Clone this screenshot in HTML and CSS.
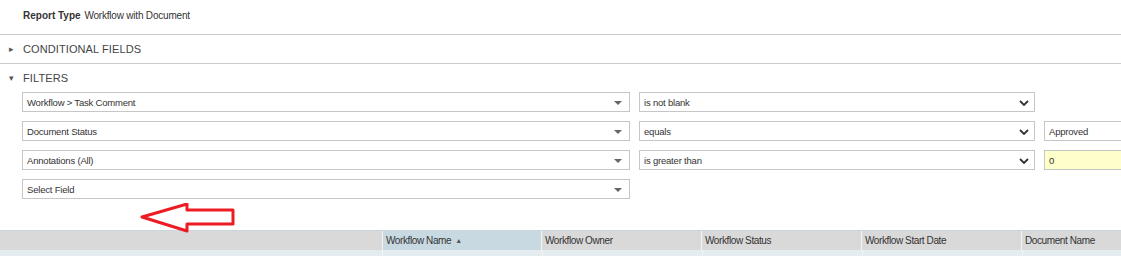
FILE: index.html
```html
<!DOCTYPE html>
<html lang="en">
<head>
    <meta charset="UTF-8">
    <title>Report Filters</title>
    <link rel="stylesheet" href="styles.css">
</head>
<body>
    <div class="report-type">
        <span class="label">Report Type</span>
        <span class="value">Workflow with Document</span>
    </div>
    <div class="section-head collapsed">
        <span class="toggle">&#9656;</span>CONDITIONAL FIELDS
    </div>
    <div class="section-head open">
        <span class="toggle">&#9662;</span>FILTERS
    </div>
    <div class="filters">
        <div class="filter-row">
            <div class="field">Workflow &gt; Task Comment<span class="caret"></span></div>
            <div class="operator">is not blank
                <svg class="chev" viewBox="0 0 10 6" width="10" height="6"><path d="M1 1 L5 5 L9 1" fill="none" stroke="#333" stroke-width="1.8"/></svg>
            </div>
        </div>
        <div class="filter-row">
            <div class="field">Document Status<span class="caret"></span></div>
            <div class="operator">equals
                <svg class="chev" viewBox="0 0 10 6" width="10" height="6"><path d="M1 1 L5 5 L9 1" fill="none" stroke="#333" stroke-width="1.8"/></svg>
            </div>
            <div class="val">Approved</div>
        </div>
        <div class="filter-row">
            <div class="field">Annotations (All)<span class="caret"></span></div>
            <div class="operator">is greater than
                <svg class="chev" viewBox="0 0 10 6" width="10" height="6"><path d="M1 1 L5 5 L9 1" fill="none" stroke="#333" stroke-width="1.8"/></svg>
            </div>
            <div class="val hl">0</div>
        </div>
        <div class="filter-row">
            <div class="field">Select Field<span class="caret"></span></div>
        </div>
        <!-- annotation arrow drawn over the page -->
        <svg class="mark" width="100" height="34" viewBox="0 0 100 34">
            <polygon points="3,14 48,1 48,7 94,7 94,21 48,21 48,28" fill="none" stroke="#ed1c24" stroke-width="3" stroke-linejoin="round"/>
        </svg>
    </div>
    <div class="grid">
        <div class="grid-head">
            <div class="col first"></div>
            <div class="col sorted">Workflow Name <span class="sort">&#9650;</span></div>
            <div class="col">Workflow Owner</div>
            <div class="col">Workflow Status</div>
            <div class="col">Workflow Start Date</div>
            <div class="col">Document Name</div>
        </div>
        <div class="grid-row">
            <div class="col first"></div>
            <div class="col"></div>
            <div class="col"></div>
            <div class="col"></div>
            <div class="col"></div>
            <div class="col"></div>
        </div>
    </div>
</body>
</html>
```

FILE: styles.css
```css
body {
    margin: 0;
    padding: 0;
    background: #fff;
    color: #333;
    font-family: 'Liberation Sans', Arial, sans-serif;
    font-size: 10px;
    overflow: hidden;
}
.report-type {
    height: 35px;
    box-sizing: border-box;
    padding: 10px 0 0 23px;
    border-bottom: 1px solid #ccc;
    font-size: 10px;
}
.report-type .label {
    font-weight: bold;
    margin-right: 1px;
}
.report-type .value {
    letter-spacing: -0.2px;
}
.section-head {
    box-sizing: border-box;
    padding-left: 9px;
    font-size: 11px;
    letter-spacing: 0.1px;
    color: #444;
    display: flex;
    align-items: center;
}
.section-head.collapsed {
    height: 29px;
    border-bottom: 1px solid #ccc;
}
.section-head.open {
    height: 27px;
    padding-top: 1px;
}
.toggle {
    width: 14px;
    font-size: 9px;
    color: #555;
}
.filters {
    position: relative;
    padding: 1px 0 0 22px;
    display: flex;
    flex-direction: column;
    gap: 9px;
    height: 139px;
    box-sizing: border-box;
}
.filter-row {
    display: flex;
    gap: 9px;
    height: 20px;
}
.field, .operator, .val {
    box-sizing: border-box;
    flex-shrink: 0;
    height: 20px;
    border: 1px solid #c6c6c6;
    padding: 0 4px;
    display: flex;
    align-items: center;
    position: relative;
    white-space: nowrap;
    font-size: 9.5px;
    letter-spacing: -0.2px;
}
.field {
    width: 608px;
}
.operator {
    width: 396px;
}
.val {
    width: 78px;
    border-right: none;
}
.val.hl {
    background: #ffffcc;
}
.caret {
    position: absolute;
    right: 7px;
    top: 8px;
    border-left: 4px solid transparent;
    border-right: 4px solid transparent;
    border-top: 4px solid #666;
}
.chev {
    position: absolute;
    right: 5px;
    top: 7px;
}
.mark {
    position: absolute;
    left: 139px;
    top: 112px;
}
.grid {
    border-top: 1px solid #c9d6de;
}
.grid-head, .grid-row {
    display: flex;
}
.grid-head {
    height: 19px;
    background: #d9d9d9;
}
.grid-row {
    height: 10px;
    background: #e4ecef;
}
.col {
    box-sizing: border-box;
    flex-shrink: 0;
    width: 160px;
    border-left: 1px solid #f4f4f4;
    padding-left: 3px;
    display: flex;
    align-items: center;
    color: #333;
    font-size: 10px;
    letter-spacing: -0.4px;
    white-space: nowrap;
}
.col.first {
    width: 382px;
    border-left: none;
}
.col.sorted {
    background: #c9d9e2;
    width: 159px;
}
.sort {
    font-size: 7px;
    margin-left: 4px;
    color: #555;
}
```
